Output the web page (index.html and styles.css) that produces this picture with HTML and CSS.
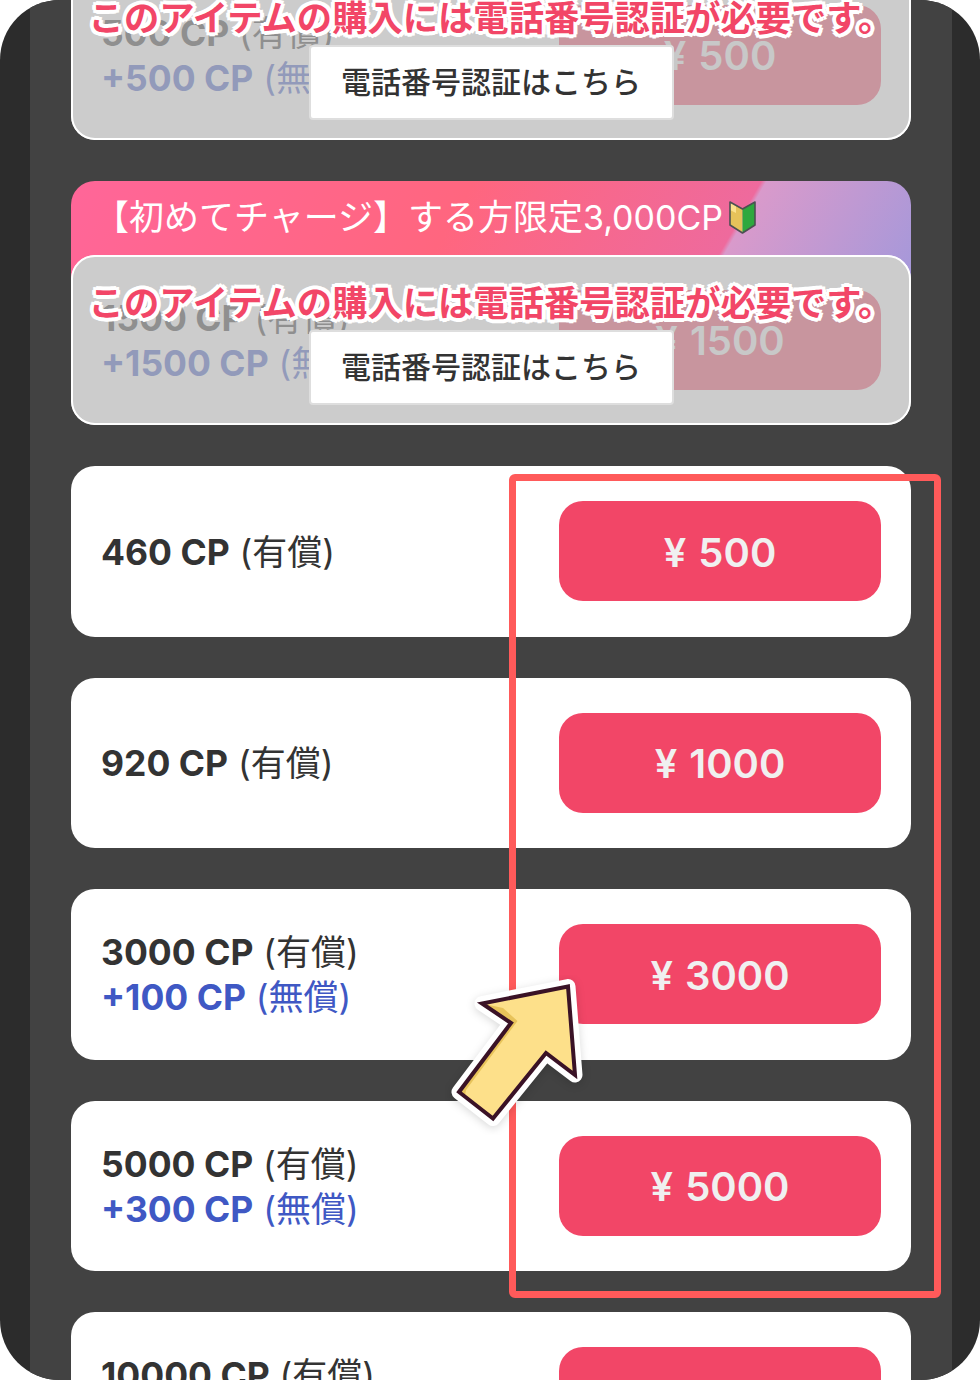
FILE: index.html
```html
<!DOCTYPE html>
<html lang="ja">
<head>
  <meta charset="UTF-8" />
  <title>CP チャージ</title>
  <link rel="stylesheet" href="styles.css">
</head>
<body>
  <div class="phone">
    <div class="screen">
      <div class="list">

        <!-- locked items -->
        <div class="item locked">
          <div class="label">
            <p><b>500 CP</b> (有償)</p>
            <p class="bonus"><b>+500 CP</b> (無償)</p>
          </div>
          <button class="price">¥ 500</button>
          <div class="lock">
            <p class="lock-msg">このアイテムの購入には電話番号認証が必要です。</p>
            <a class="lock-btn">電話番号認証はこちら</a>
          </div>
        </div>

        <div class="group">
          <div class="banner">
            <span>【初めてチャージ】する方限定<span class="banner-num">3,000CP</span></span>
            <svg class="mark" width="27" height="34" viewBox="0 0 27 34">
              <path d="M1 2 13.5 9V33L1 25Z" fill="#e6c25a" />
              <path d="M1 2 7 5.5V13L1 10Z" fill="#fbe08c" />
              <path d="M26 2 13.5 9V33L26 25Z" fill="#2ea83e" />
              <path d="M1 2 13.5 9 26 2V25L13.5 33 1 25Z" fill="none" stroke="#4d5052" stroke-width="1.6" stroke-linejoin="round" />
            </svg>
          </div>
          <div class="item locked">
            <div class="label">
              <p><b>1500 CP</b> (有償)</p>
              <p class="bonus"><b>+1500 CP</b> (無償)</p>
            </div>
            <button class="price">¥ 1500</button>
            <div class="lock">
              <p class="lock-msg">このアイテムの購入には電話番号認証が必要です。</p>
              <a class="lock-btn">電話番号認証はこちら</a>
            </div>
          </div>
        </div>

        <!-- normal items -->
        <div class="item">
          <div class="label">
            <p><b>460 CP</b> (有償)</p>
          </div>
          <button class="price">¥ 500</button>
        </div>

        <div class="item">
          <div class="label">
            <p><b>920 CP</b> (有償)</p>
          </div>
          <button class="price">¥ 1000</button>
        </div>

        <div class="item">
          <div class="label">
            <p><b>3000 CP</b> (有償)</p>
            <p class="bonus"><b>+100 CP</b> (無償)</p>
          </div>
          <button class="price">¥ 3000</button>
        </div>

        <div class="item">
          <div class="label">
            <p><b>5000 CP</b> (有償)</p>
            <p class="bonus"><b>+300 CP</b> (無償)</p>
          </div>
          <button class="price">¥ 5000</button>
        </div>

        <div class="item">
          <div class="label">
            <p><b>10000 CP</b> (有償)</p>
            <p class="bonus"><b>+1000 CP</b> (無償)</p>
          </div>
          <button class="price">¥ 10000</button>
        </div>

      </div>
    </div>

    <!-- annotation -->
    <div class="highlight"></div>
    <svg class="arrow" width="150" height="160" viewBox="445 975 150 160">
      <path class="arrow-halo" d="M568 986.5 482 1003.5 511 1023 459 1092 493 1118.5 546 1053 575 1075Z" />
      <path class="arrow-fill" d="M568 986.5 482 1003.5 511 1023 459 1092 493 1118.5 546 1053 575 1075Z" />
      <path class="arrow-shade" d="M482 1003.5 503 1008 517.5 1021 466 1090 465 1096 493 1118.5 459 1092 511 1023Z" />
      <path class="arrow-line" d="M568 986.5 482 1003.5 511 1023 459 1092 493 1118.5 546 1053 575 1075Z" />
    </svg>
  </div>
</body>
</html>
```

FILE: styles.css
```css
* { margin: 0; padding: 0; box-sizing: border-box; }
html, body { width: 980px; height: 1380px; background: #fff; overflow: hidden; }
body { font-family: Inter, 'Noto Sans CJK JP', sans-serif; color: #333; }

/* Frame */
.phone { position: relative; width: 980px; height: 1380px; border-radius: 60px; background: #2c2c2c; overflow: hidden; }
.screen { width: 922px; height: 1380px; margin-left: 30px; padding: 0 41px; background: #424242; overflow: hidden; }
.list { display: flex; flex-direction: column; gap: 41px; margin-top: -30.5px; }

/* Items */
.item { position: relative; display: flex; justify-content: space-between; align-items: center; height: 170.5px; padding: 0 30px; background: #fff; border-radius: 24px; overflow: hidden; }
.label { padding-top: 2px; font-size: 35px; line-height: 45px; white-space: nowrap; }
.label b { font-size: 35.5px; font-weight: 700; }
.bonus { color: #3f58c4; }
.price { width: 322px; height: 100px; padding-top: 2px; border: none; border-radius: 24px; background: #f24667; color: #f0f0f0; font-family: inherit; font-size: 40px; font-weight: 600; word-spacing: 2px; }

/* Banner */
.banner { display: flex; align-items: flex-start; gap: 6px; height: 98px; margin-bottom: -24.5px; padding: 13px 0 0 23px; border-radius: 24px 24px 0 0; color: #fff; font-size: 35px; line-height: 46px; background: linear-gradient(120deg, #ff6699 0%, #ff667f 45%, #ee6a9d 77%, #d99acb 77.6%, #a598da 100%); }
.banner-num { font-size: 34px; }
.mark { margin-top: 6px; flex: none; }

/* Locked overlay */
.lock { position: absolute; inset: 0; display: flex; flex-direction: column; align-items: center; border: 2px solid #fff; border-radius: 24px; background: rgba(182, 182, 182, 0.7); }
.lock-msg { margin-top: 25px; color: #f24667; font-size: 35.3px; font-weight: 700; line-height: 44px; white-space: nowrap; text-shadow: 4px 0 0 #fff, -4px 0 0 #fff, 0 4px 0 #fff, 0 -4px 0 #fff, 3px 3px 0 #fff, -3px 3px 0 #fff, 3px -3px 0 #fff, -3px -3px 0 #fff; }
.lock-btn { display: block; width: 365px; height: 75px; margin-top: 4px; border: 2px solid #dedede; border-radius: 4px; background: #fff; color: #333; font-size: 30px; font-weight: 500; line-height: 71px; text-align: center; }

/* Annotation */
.highlight { position: absolute; left: 509px; top: 474px; width: 432px; height: 824px; border: 7px solid #ff5a5a; border-radius: 6px; }
.arrow { position: absolute; left: 445px; top: 975px; }
.arrow-halo { fill: #fff; stroke: #fff; stroke-width: 15px; stroke-linejoin: round; filter: drop-shadow(0 2px 4px rgba(0, 0, 0, 0.15)); }
.arrow-fill { fill: #fde08a; }
.arrow-shade { fill: #e8c35a; }
.arrow-line { fill: none; stroke: #3a1226; stroke-width: 4px; stroke-linejoin: miter; }
```
